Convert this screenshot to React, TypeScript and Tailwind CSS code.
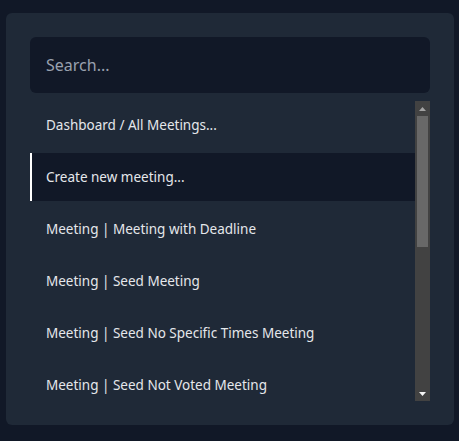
const items = [
  "Dashboard / All Meetings...",
  "Create new meeting...",
  "Meeting | Meeting with Deadline",
  "Meeting | Seed Meeting",
  "Meeting | Seed No Specific Times Meeting",
  "Meeting | Seed Not Voted Meeting",
];

function Scrollbar() {
  return (
    <div className="flex w-[15px] shrink-0 flex-col bg-[#424242]">
      <div className="flex h-[15px] items-center justify-center">
        <svg width="7" height="4" viewBox="0 0 7 4">
          <path d="M3.5 0 L7 4 L0 4 Z" fill="#a3a3a3" />
        </svg>
      </div>
      <div className="mx-[2px] h-[131px] bg-[#686868]" />
      <div className="flex-1" />
      <div className="flex h-[15px] items-center justify-center">
        <svg width="7" height="4" viewBox="0 0 7 4">
          <path d="M0 0 L7 0 L3.5 4 Z" fill="#f5f5f5" />
        </svg>
      </div>
    </div>
  );
}

export default function App() {
  return (
    <div className="min-h-screen bg-[#111827] pt-[13px] pl-[6px] font-['Noto_Sans',sans-serif]">
      <div className="w-[448px] rounded-md bg-[#1f2937] p-6">
        <input
          type="text"
          placeholder="Search..."
          className="h-14 w-full rounded-md bg-[#111827] px-4 text-base text-gray-200 placeholder:text-gray-400 outline-none"
        />
        <div className="mt-2 flex h-[300px]">
          <ul className="flex flex-1 flex-col gap-1 overflow-hidden">
            {items.map((item, i) => (
              <li
                key={item}
                className={
                  i === 1
                    ? "flex h-12 shrink-0 items-center border-l-2 border-white bg-[#111827] pl-[14px] text-[13.5px] text-gray-200"
                    : "flex h-12 shrink-0 items-center pl-4 text-[13.5px] text-gray-200"
                }
              >
                {item}
              </li>
            ))}
          </ul>
          <Scrollbar />
        </div>
      </div>
    </div>
  );
}
